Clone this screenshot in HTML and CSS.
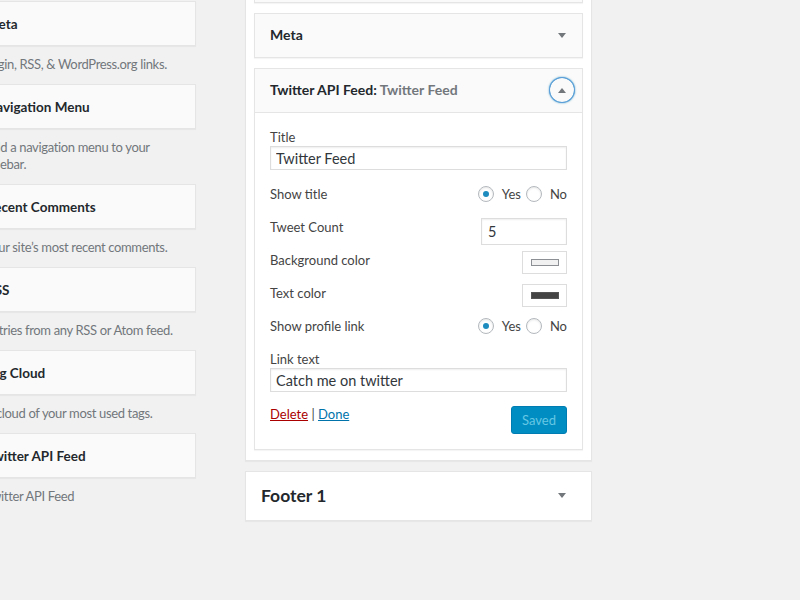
FILE: index.html
```html
<!DOCTYPE html>
<html>
<head>
<meta charset="utf-8">
<title>Widgets</title>
<link rel="stylesheet" href="styles.css">
</head>
<body>
<div class="page">
  <div class="available">
    <div class="avail-item">
      <div class="avail-top"><h3>Meta</h3></div>
      <div class="avail-desc">Login, RSS, &amp; WordPress.org links.</div>
    </div>
    <div class="avail-item">
      <div class="avail-top"><h3>Navigation Menu</h3></div>
      <div class="avail-desc">Add a navigation menu to your<br>sidebar.</div>
    </div>
    <div class="avail-item">
      <div class="avail-top"><h3>Recent Comments</h3></div>
      <div class="avail-desc">Your site’s most recent comments.</div>
    </div>
    <div class="avail-item">
      <div class="avail-top"><h3>RSS</h3></div>
      <div class="avail-desc">Entries from any RSS or Atom feed.</div>
    </div>
    <div class="avail-item">
      <div class="avail-top"><h3>Tag Cloud</h3></div>
      <div class="avail-desc">A cloud of your most used tags.</div>
    </div>
    <div class="avail-item">
      <div class="avail-top"><h3>Twitter API Feed</h3></div>
      <div class="avail-desc">Twitter API Feed</div>
    </div>
  </div>

  <div class="sidebars">
    <div class="holder open">
      <div class="widget">
        <div class="widget-top"><h3>Pages</h3><span class="toggle"><span class="arrow-down"></span></span></div>
      </div>
      <div class="widget">
        <div class="widget-top"><h3>Meta</h3><span class="toggle"><span class="arrow-down"></span></span></div>
      </div>
      <div class="widget">
        <div class="widget-top expanded"><h3>Twitter API Feed<span class="colon">:</span> <span class="in-title">Twitter Feed</span></h3><span class="toggle"><span class="indicator"><span class="arrow-up"></span></span></span></div>
        <div class="widget-inside">
          <div class="field">
            <label class="lbl">Title</label>
            <input class="text-input" type="text" value="Twitter Feed">
          </div>
          <div class="row">
            <label class="lbl">Show title</label>
            <div class="radios">
              <input class="radio" type="radio" name="st" checked><span class="opt">Yes</span>
              <input class="radio" type="radio" name="st"><span class="opt last">No</span>
            </div>
          </div>
          <div class="row">
            <label class="lbl">Tweet Count</label>
            <input class="count-input" type="text" value="5">
          </div>
          <div class="row">
            <label class="lbl">Background color</label>
            <span class="swatch"><span class="chip light"></span></span>
          </div>
          <div class="row">
            <label class="lbl">Text color</label>
            <span class="swatch"><span class="chip dark"></span></span>
          </div>
          <div class="row">
            <label class="lbl">Show profile link</label>
            <div class="radios">
              <input class="radio" type="radio" name="sp" checked><span class="opt">Yes</span>
              <input class="radio" type="radio" name="sp"><span class="opt last">No</span>
            </div>
          </div>
          <div class="field last-field">
            <label class="lbl">Link text</label>
            <input class="text-input" type="text" value="Catch me on twitter">
          </div>
          <div class="actions">
            <div class="links"><a class="delete" href="#">Delete</a> <span class="sep">|</span> <a class="done" href="#">Done</a></div>
            <button class="saved" type="button">Saved</button>
          </div>
        </div>
      </div>
    </div>
    <div class="holder closed">
      <h2>Footer 1</h2>
      <span class="arrow-down"></span>
    </div>
  </div>
</div>
</body>
</html>
```

FILE: styles.css
```css
* { box-sizing: border-box; }
html, body { margin: 0; padding: 0; }
body {
  background: #f1f1f1;
  font-family: Lato, "Open Sans", sans-serif;
  font-size: 13px;
  color: #444;
  height: 600px;
  overflow: hidden;
}
.page {
  display: flex;
  align-items: flex-start;
  margin-left: -30px;
}

/* available widgets */
.available {
  width: 226px;
  flex: none;
  padding-top: 1px;
}
.avail-top {
  height: 45px;
  border: 1px solid #e5e5e5;
  background: #fafafa;
  box-shadow: 0 1px 1px rgba(0,0,0,.04);
  display: flex;
  align-items: center;
  padding: 0 15px;
}
.avail-top h3,
.widget-top h3 {
  margin: 0;
  font-size: 14px;
  font-weight: 700;
  color: #23282d;
  line-height: 18px;
  white-space: nowrap;
}
.avail-top h3 {
  font-size: 13.5px;
}
.avail-desc {
  padding: 10px 15px 11px;
  line-height: 17px;
  color: #72777c;
  white-space: nowrap;
  letter-spacing: -0.35px;
}

/* sidebars */
.sidebars {
  width: 347px;
  flex: none;
  margin-left: 49px;
  margin-top: -43px;
}
.holder {
  background: #fff;
  border: 1px solid #e5e5e5;
  box-shadow: 0 1px 1px rgba(0,0,0,.04);
}
.holder.open {
  padding: 0 8px 10px;
}
.widget {
  border: 1px solid #e5e5e5;
  background: #fafafa;
  box-shadow: 0 1px 1px rgba(0,0,0,.04);
}
.widget + .widget { margin-top: 10px; }
.widget-top {
  height: 43px;
  display: flex;
  align-items: center;
  padding-left: 15px;
}
.widget-top.expanded {
  height: 44px;
  border-bottom: 1px solid #e5e5e5;
}
.widget-top h3 { flex: 1; margin-top: -1px; }
.in-title {
  font-weight: 700;
  color: #72777c;
}
.toggle {
  width: 40px;
  height: 43px;
  flex: none;
  display: flex;
  align-items: center;
  justify-content: center;
}
.arrow-down {
  width: 0;
  height: 0;
  border-left: 4.5px solid transparent;
  border-right: 4.5px solid transparent;
  border-top: 5px solid #72777c;
  margin-top: -1px;
}
.arrow-up {
  width: 0;
  height: 0;
  border-left: 4.5px solid transparent;
  border-right: 4.5px solid transparent;
  border-bottom: 5px solid #72777c;
  margin-top: 1px;
}
.indicator {
  width: 24px;
  height: 24px;
  border-radius: 50%;
  box-shadow: 0 0 0 1px #5b9dd9, 0 0 2px 1px rgba(30,140,190,.8);
  display: flex;
  align-items: center;
  justify-content: center;
  margin-top: -1px;
}

/* widget form */
.widget-inside {
  background: #fff;
  padding: 15px;
}
.lbl {
  display: block;
  line-height: 18px;
  color: #444;
}
.field { margin-bottom: 15px; }
.field.last-field { margin-bottom: 0; }
.text-input {
  display: block;
  width: 100%;
  height: 24px;
  margin: 0;
  padding: 0 5px;
  border: 1px solid #ddd;
  box-shadow: inset 0 1px 2px rgba(0,0,0,.07);
  background: #fff;
  color: #32373c;
  font-family: Lato, "Open Sans", sans-serif;
  font-size: 14.5px;
  outline: none;
}
.row {
  height: 33px;
  display: flex;
  justify-content: space-between;
  align-items: flex-start;
}
.count-input {
  width: 86px;
  height: 27px;
  margin: 0;
  padding: 0 6px;
  border: 1px solid #ddd;
  box-shadow: inset 0 1px 2px rgba(0,0,0,.07);
  background: #fff;
  color: #32373c;
  font-family: Lato, "Open Sans", sans-serif;
  font-size: 14.5px;
  outline: none;
}
.swatch {
  width: 45px;
  height: 23px;
  border: 1px solid #ddd;
  background: #fff;
  display: flex;
  align-items: center;
  justify-content: center;
}
.chip {
  width: 28px;
  height: 7px;
  border: 1px solid #8c8f94;
}
.chip.light { background: #f1f1f1; }
.chip.dark { background: #444; border-color: #555; }

.radios {
  display: flex;
  align-items: center;
  height: 18px;
  line-height: 18px;
}
.radio {
  -webkit-appearance: none;
  appearance: none;
  width: 16px;
  height: 16px;
  margin: 0 8px 0 0;
  border: 1px solid #b4b9be;
  border-radius: 50%;
  background: #fff;
  box-shadow: inset 0 1px 2px rgba(0,0,0,.1);
  display: flex;
  align-items: center;
  justify-content: center;
  outline: none;
}
.radio:checked::before {
  content: "";
  width: 6px;
  height: 6px;
  border-radius: 50%;
  background: #1e8cbe;
}
.opt { margin-right: 5px; color: #444; }
.opt.last { margin-right: 0; }

.actions {
  display: flex;
  justify-content: space-between;
  align-items: flex-start;
  margin-top: 14px;
}
.links { line-height: 17px; }
.delete { color: #a00; text-decoration: underline; }
.done { color: #0073aa; text-decoration: underline; }
.sep { color: #444; }
.saved {
  height: 28px;
  margin: 0;
  padding: 0 10px 1px;
  border: 1px solid #007cb2;
  border-radius: 3px;
  background: #008ec2;
  color: #66c6e4;
  font-family: Lato, "Open Sans", sans-serif;
  font-size: 13px;
  line-height: 26px;
}

.holder.closed {
  margin-top: 10px;
  height: 50px;
  display: flex;
  align-items: center;
  justify-content: space-between;
  padding: 0 25px 0 15px;
}
.holder.closed h2 {
  margin: 0;
  font-size: 17.5px;
  font-weight: 700;
  color: #23282d;
  line-height: 20px;
}
```
